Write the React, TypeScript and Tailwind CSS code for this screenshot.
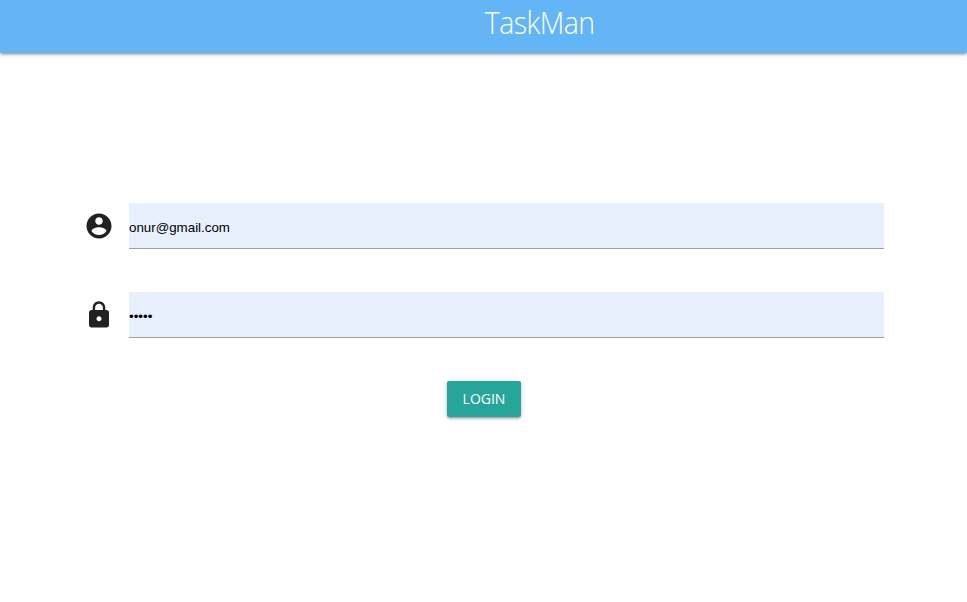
import React from "react";

function AccountIcon() {
  return (
    <svg viewBox="0 0 24 24" className="mx-px size-[30px] shrink-0 fill-[#212121]" aria-hidden="true">
      <path d="M12 2C6.48 2 2 6.48 2 12s4.48 10 10 10 10-4.48 10-10S17.52 2 12 2zm0 3c1.66 0 3 1.34 3 3s-1.34 3-3 3-3-1.34-3-3 1.34-3 3-3zm0 14.2c-2.5 0-4.71-1.28-6-3.22.03-1.99 4-3.08 6-3.08 1.99 0 5.97 1.09 6 3.08-1.29 1.94-3.5 3.22-6 3.22z" />
    </svg>
  );
}

function LockIcon() {
  return (
    <svg viewBox="0 0 24 24" className="mx-px size-[30px] shrink-0 fill-[#212121]" aria-hidden="true">
      <path d="M18 8h-1V6c0-2.76-2.24-5-5-5S7 3.24 7 6v2H6c-1.1 0-2 .9-2 2v10c0 1.1.9 2 2 2h12c1.1 0 2-.9 2-2V10c0-1.1-.9-2-2-2zm-6 9c-1.1 0-2-.9-2-2s.9-2 2-2 2 .9 2 2-.9 2-2 2zm3.1-9H8.9V6c0-1.71 1.39-3.1 3.1-3.1 1.71 0 3.1 1.39 3.1 3.1v2z" />
    </svg>
  );
}

export default function App() {
  return (
    <div className="h-[602px] w-full overflow-hidden bg-white font-['Open_Sans',sans-serif]">
      <nav className="flex h-[53px] justify-center bg-[#64b5f6] pl-[113px] shadow-[0_2px_2px_0_rgba(0,0,0,0.14),0_3px_1px_-2px_rgba(0,0,0,0.12),0_1px_5px_0_rgba(0,0,0,0.2)]">
        <h1 className="mt-[-2px] flex h-12 scale-x-[0.92] items-center text-[31px] font-light tracking-[-0.6px] text-white">TaskMan</h1>
      </nav>
      <form className="flex flex-col pt-[150px] pr-[83px] pl-[83px]" onSubmit={(e) => e.preventDefault()}>
        <div className="flex h-[46px] items-center gap-[14px]">
          <AccountIcon />
          <input type="email" defaultValue="onur@gmail.com" className="h-full min-w-0 grow border-b border-[#9e9e9e] bg-[#e8f0fe] pt-1 font-['Liberation_Sans',sans-serif] text-[13.333px] text-black outline-none" />
        </div>
        <div className="mt-[43px] flex h-[46px] items-center gap-[14px]">
          <LockIcon />
          <input type="password" defaultValue="admin" className="h-full min-w-0 grow border-b border-[#9e9e9e] bg-[#e8f0fe] pt-1 font-['Liberation_Sans',sans-serif] text-[13.333px] text-black outline-none" />
        </div>
        <button className="mt-[43px] h-9 w-[74px] self-center rounded-[2px] bg-[#26a69a] pl-px text-sm text-white shadow-[0_2px_2px_0_rgba(0,0,0,0.14),0_3px_1px_-2px_rgba(0,0,0,0.12),0_1px_5px_0_rgba(0,0,0,0.2)]">LOGIN</button>
      </form>
    </div>
  );
}
